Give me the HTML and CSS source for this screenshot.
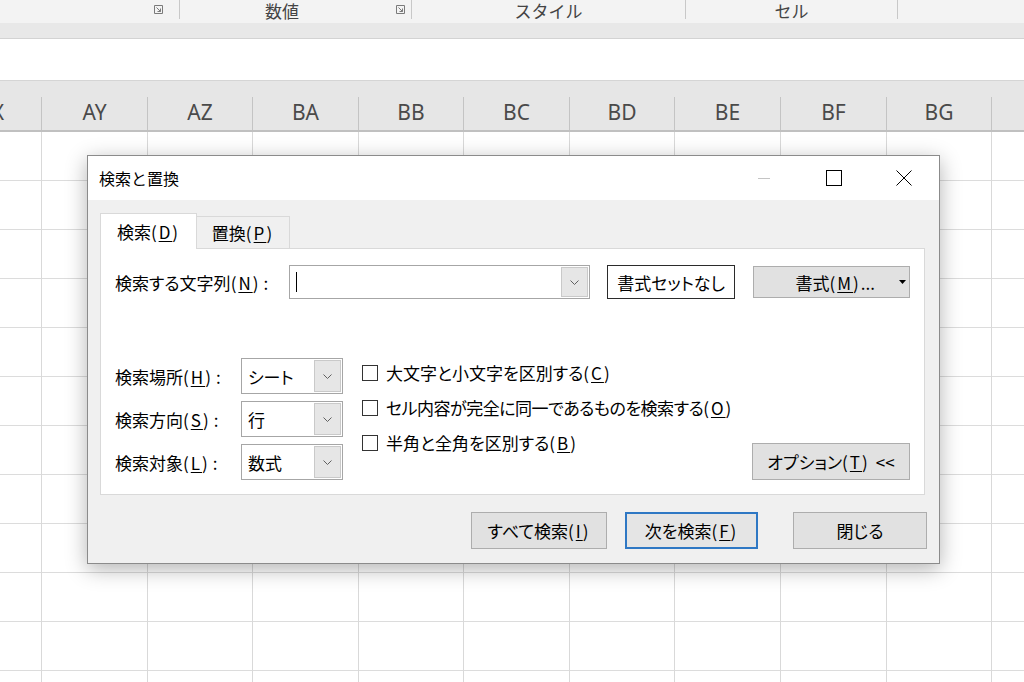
FILE: index.html
```html
<!DOCTYPE html>
<html lang="ja">
<head>
<meta charset="utf-8">
<title>検索と置換</title>
<link rel="stylesheet" href="styles.css">
</head>
<body>
<div class="ribbon">
  <div class="rgroup g1">
    <span class="rlabel"></span>
    <svg class="launcher" viewBox="0 0 9 9" width="9" height="9"><path d="M.5.5h8v8h-8z" fill="none" stroke="#7a7a7a"/><path d="M2.5 2.5l4 4M3.5 6.5h3v-3" fill="none" stroke="#7a7a7a"/></svg>
  </div>
  <div class="rgroup g2">
    <span class="rlabel">数値</span>
    <svg class="launcher" viewBox="0 0 9 9" width="9" height="9"><path d="M.5.5h8v8h-8z" fill="none" stroke="#7a7a7a"/><path d="M2.5 2.5l4 4M3.5 6.5h3v-3" fill="none" stroke="#7a7a7a"/></svg>
  </div>
  <div class="rgroup g3"><span class="rlabel">スタイル</span></div>
  <div class="rgroup g4"><span class="rlabel">セル</span></div>
  <div class="rgroup g5"></div>
</div>
<div class="ribbon-foot"></div>
<div class="formula"></div>
<div class="colhead">
  <div class="hcell first"><span>AX</span></div>
  <div class="hcell">AY</div>
  <div class="hcell">AZ</div>
  <div class="hcell">BA</div>
  <div class="hcell">BB</div>
  <div class="hcell">BC</div>
  <div class="hcell">BD</div>
  <div class="hcell">BE</div>
  <div class="hcell">BF</div>
  <div class="hcell">BG</div>
  <div class="hcell last"></div>
</div>
<div class="cells">
  <div class="col"></div><div class="col"></div><div class="col"></div><div class="col"></div>
  <div class="col"></div><div class="col"></div><div class="col"></div><div class="col"></div>
  <div class="col"></div><div class="col"></div><div class="col last"></div>
</div>

<div class="dialog">
  <div class="titlebar">
    <span class="title">検索と置換</span>
    <div class="winbtns">
      <span class="wb"><svg width="12" height="1" viewBox="0 0 12 1"><rect width="12" height="1" fill="#c4c4c4"/></svg></span>
      <span class="wb"><svg width="16" height="16" viewBox="0 0 16 16"><rect x=".5" y=".5" width="15" height="15" fill="none" stroke="#000"/></svg></span>
      <span class="wb"><svg width="16" height="16" viewBox="0 0 16 16"><path d="M.5.5l15 15M15.5.5l-15 15" fill="none" stroke="#000"/></svg></span>
    </div>
  </div>
  <div class="dbody">
    <div class="tabs">
      <div class="tab active">検索<span class="acc">(<u>D</u>)</span></div>
      <div class="tab">置換<span class="acc">(<u>P</u>)</span></div>
    </div>
    <div class="panel">
      <div class="findrow">
        <span class="lbl lbl-find">検索する文字列<span class="acc">(<u>N</u>)</span><span class="colon">:</span></span>
        <div class="combo wide">
          <span class="caret"></span>
          <span class="dd"><svg width="9" height="5" viewBox="0 0 9 5"><path d="M.5.5l4 4 4-4" fill="none" stroke="#606060"/></svg></span>
        </div>
        <button class="btn fmtnone">書式セットなし</button>
        <button class="btn fmt"><span>書式<span class="acc">(<u>M</u>)</span>...</span><svg class="tri" width="7" height="4" viewBox="0 0 7 4"><path d="M0 0h7L3.5 4z" fill="#000"/></svg></button>
      </div>
      <div class="optarea">
        <div class="selects">
          <div class="selrow">
            <span class="lbl lbl-sel">検索場所<span class="acc">(<u>H</u>)</span><span class="colon">:</span></span>
            <div class="combo sel"><span class="val">シート</span><span class="dd"><svg width="9" height="5" viewBox="0 0 9 5"><path d="M.5.5l4 4 4-4" fill="none" stroke="#606060"/></svg></span></div>
          </div>
          <div class="selrow">
            <span class="lbl lbl-sel">検索方向<span class="acc">(<u>S</u>)</span><span class="colon">:</span></span>
            <div class="combo sel"><span class="val">行</span><span class="dd"><svg width="9" height="5" viewBox="0 0 9 5"><path d="M.5.5l4 4 4-4" fill="none" stroke="#606060"/></svg></span></div>
          </div>
          <div class="selrow">
            <span class="lbl lbl-sel">検索対象<span class="acc">(<u>L</u>)</span><span class="colon">:</span></span>
            <div class="combo sel"><span class="val">数式</span><span class="dd"><svg width="9" height="5" viewBox="0 0 9 5"><path d="M.5.5l4 4 4-4" fill="none" stroke="#606060"/></svg></span></div>
          </div>
        </div>
        <div class="checks">
          <div class="chk"><span class="box"></span>大文字と小文字を区別する<span class="acc">(<u>C</u>)</span></div>
          <div class="chk narrow"><span class="box"></span>セル内容が完全に同一であるものを検索する<span class="acc">(<u>O</u>)</span></div>
          <div class="chk"><span class="box"></span>半角と全角を区別する<span class="acc">(<u>B</u>)</span></div>
        </div>
        <button class="btn opt">オプション<span class="acc">(<u>T</u>)</span><span class="ltlt">&lt;&lt;</span></button>
      </div>
    </div>
    <div class="actions">
      <button class="btn act all">すべて検索<span class="acc">(<u>I</u>)</span></button>
      <button class="btn act next">次を検索<span class="acc">(<u>F</u>)</span></button>
      <button class="btn act close">閉じる</button>
    </div>
  </div>
</div>
</body>
</html>
```
FILE: styles.css
```css
* { box-sizing: border-box; }
html, body { margin: 0; padding: 0; }
body {
  width: 1024px;
  height: 682px;
  overflow: hidden;
  background: #fff;
  position: relative;
  font-family: "Noto Sans", "Noto Sans CJK JP", sans-serif;
}

/* ribbon */
.ribbon {
  height: 23px;
  background: #f3f3f3;
  display: flex;
  align-items: flex-start;
  color: #444;
  font-family: "Noto Sans CJK JP", sans-serif;
  font-size: 17px;
}
.rgroup {
  height: 19px;
  display: flex;
  align-items: flex-start;
  border-right: 1px solid #c8c8c8;
}
.g1 { width: 180px; }
.g2 { width: 232px; }
.g3 { width: 274px; }
.g4 { width: 212px; }
.g5 { flex: 1; border-right: none; }
.rlabel {
  flex: 1;
  text-align: center;
  line-height: 22px;
  white-space: nowrap;
}
.g2 .rlabel { margin-right: 12px; }
.launcher { display: block; margin-top: 5px; }
.g1 .launcher { margin-right: 16px; }
.g2 .launcher { margin-right: 6px; }
.ribbon-foot {
  height: 16px;
  background: #e8e8e8;
  border-bottom: 1px solid #d3d3d3;
}
.formula {
  height: 42px;
  background: #fff;
  border-bottom: 1px solid #d5d5d5;
}

/* sheet */
.colhead, .cells {
  display: grid;
  grid-template-columns: 42px 106px 105px 106px 105px 106px 105px 106px 106px 105px 1fr;
}
.colhead {
  height: 51px;
  padding-top: 16px;
  background: #e6e6e6;
  border-bottom: 2px solid #c0c0c0;
}
.hcell {
  height: 33px;
  border-right: 1px solid #c4c4c4;
  display: flex;
  align-items: center;
  justify-content: center;
  padding-bottom: 4px;
  font-size: 21px;
  color: #4a4a4a;
  overflow: hidden;
  white-space: nowrap;
}
.hcell.first { justify-content: flex-end; padding-right: 37px; }
.hcell.last { border-right: none; }
.cells {
  height: 550px;
  background: repeating-linear-gradient(to bottom, #fff 0 48px, #dcdcdc 48px 49px);
}
.col { border-right: 1px solid #d9d9d9; }
.col.last { border-right: none; }

/* dialog */
.dialog {
  position: absolute;
  left: 87px;
  top: 155px;
  width: 853px;
  height: 409px;
  border: 1px solid #8b8b8b;
  background: #f0f0f0;
  box-shadow: 0 5px 20px rgba(0, 0, 0, 0.3);
  font-family: "Noto Sans CJK JP", sans-serif;
  font-size: 17px;
  color: #000;
  font-feature-settings: "palt";
  display: flex;
  flex-direction: column;
}
.titlebar {
  height: 44px;
  background: #fff;
  display: flex;
  align-items: center;
  flex: none;
}
.title { flex: 1; padding-left: 11px; font-size: 16px; font-feature-settings: normal; }
.winbtns { display: flex; height: 100%; }
.wb {
  width: 70px;
  display: flex;
  align-items: center;
  justify-content: center;
}
.wb svg { display: block; }

.dbody {
  flex: 1;
  padding: 13px 12px 0 12px;
  display: flex;
  flex-direction: column;
}
.acc { letter-spacing: 2px; }
.colon { margin-left: 3px; }
.ltlt { margin-left: 6px; }
u { text-decoration-thickness: 1px; text-underline-offset: 2px; }

.tabs {
  display: flex;
  align-items: flex-end;
  height: 35px;
}
.tab {
  height: 32px;
  width: 93px;
  border: 1px solid #d9d9d9;
  border-left: none;
  border-bottom: none;
  background: #f0f0f0;
  display: flex;
  align-items: center;
  justify-content: center;
}
.tab.active {
  height: 36px;
  width: 97px;
  background: #fff;
  border-left: 1px solid #d9d9d9;
  margin-bottom: -1px;
  position: relative;
  z-index: 1;
}

.panel {
  height: 247px;
  margin-right: 2px;
  background: #fff;
  border: 1px solid #d9d9d9;
  padding: 16px 14px 0 14px;
}
.findrow {
  display: flex;
  align-items: center;
  height: 34px;
}
.lbl { white-space: nowrap; }
.lbl-find { width: 174px; }
.combo {
  display: flex;
  align-items: stretch;
  background: #fff;
  border: 1px solid #a6a6a6;
}
.combo.wide { width: 301px; height: 34px; }
.caret {
  width: 1px;
  height: 20px;
  background: #000;
  margin: 6px 0 0 6px;
}
.dd {
  margin-left: auto;
  width: 27px;
  border: 1px solid #c9c9c9;
  margin-top: 1px;
  margin-bottom: 1px;
  margin-right: 1px;
  background: #e6e6e6;
  display: flex;
  align-items: center;
  justify-content: center;
}
.dd svg { display: block; }

.btn {
  font-family: inherit;
  font-size: 17px;
  color: #000;
  font-feature-settings: "palt";
  background: #e1e1e1;
  border: 1px solid #adadad;
  padding: 0;
  margin: 0;
  display: flex;
  align-items: center;
  justify-content: center;
  white-space: nowrap;
}
.fmtnone {
  margin-left: 17px;
  width: 128px;
  height: 34px;
  background: #fff;
  border: 1px solid #2b2b2b;
}
.fmt {
  margin-left: 18px;
  width: 157px;
  height: 32px;
  justify-content: flex-end;
  padding-right: 3px;
}
.fmt .tri { margin-left: 24px; display: block; }

.optarea {
  margin-top: 56px;
  display: flex;
  align-items: flex-start;
}
.selects {
  padding-top: 3px;
  display: flex;
  flex-direction: column;
  gap: 7px;
}
.selrow {
  display: flex;
  align-items: center;
  height: 36px;
}
.lbl-sel { width: 126px; }
.combo.sel { width: 102px; height: 36px; }
.val { padding-left: 6px; display: flex; align-items: center; }

.checks {
  margin-left: 19px;
  display: flex;
  flex-direction: column;
}
.chk {
  height: 35px;
  display: flex;
  align-items: center;
  white-space: nowrap;
}
.chk.narrow { letter-spacing: -0.5px; }
.chk.narrow .acc { letter-spacing: 2px; }
.box {
  width: 16px;
  height: 16px;
  border: 1px solid #333;
  background: #fff;
  margin-right: 8px;
  flex: none;
}
.opt {
  margin-left: auto;
  align-self: flex-end;
  width: 158px;
  height: 37px;
}

.actions {
  margin-top: 17px;
  display: flex;
  justify-content: flex-end;
}
.act { height: 37px; }
.all { width: 136px; }
.next {
  width: 133px;
  margin-left: 18px;
  border: 2px solid #2f78c4;
  background: #e5e5e5;
}
.close { width: 134px; margin-left: 35px; }
```
